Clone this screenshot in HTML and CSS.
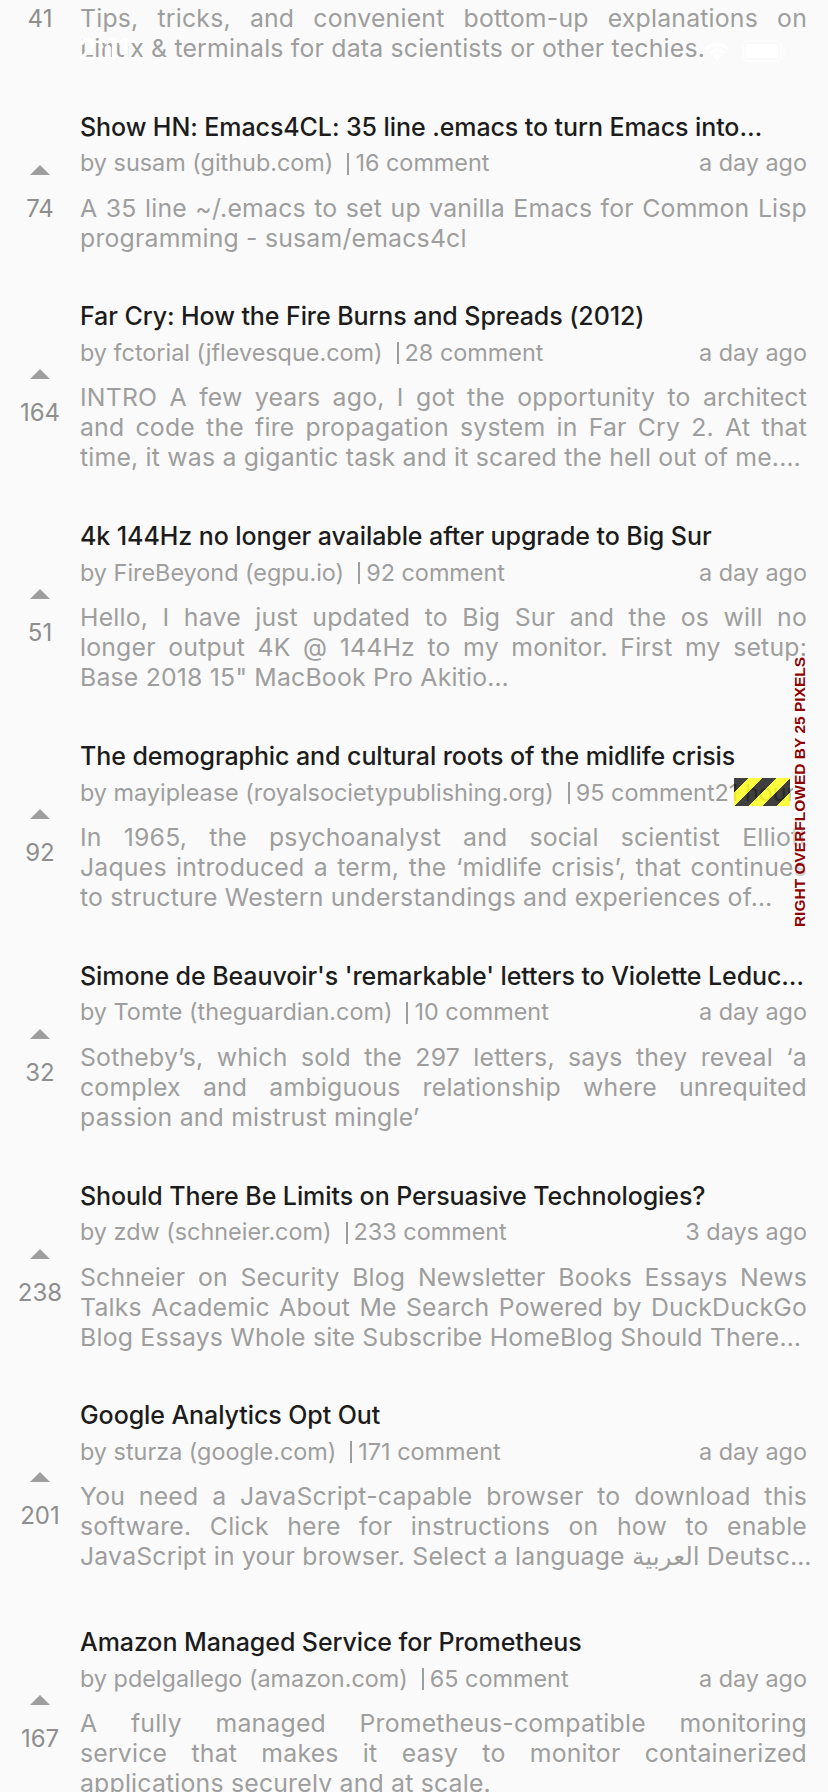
FILE: index.html
```html
<!DOCTYPE html>
<html lang="en">
<head>
<meta charset="utf-8">
<title>Hacker News</title>
<link rel="stylesheet" href="styles.css">
</head>
<body>
<div class="statusbar">
  <span class="clock">2:11</span>
  <span class="status-icons">
    <svg class="wifi" viewBox="0 0 30 22"><path d="M15 21 10 15.5a7.5 7.5 0 0 1 10 0Z M6.5 12a12 12 0 0 1 17 0l-2.2 2.3a9 9 0 0 0-12.6 0Z M2.5 8a18 18 0 0 1 25 0l-2.2 2.3a15 15 0 0 0-20.6 0Z"/></svg>
    <svg class="battery" viewBox="0 0 46 22"><rect x="1" y="1" width="38" height="20" rx="5" fill="none" stroke="#fff" stroke-width="2" opacity=".5"/><rect x="4" y="4" width="32" height="14" rx="2.5"/><rect x="41" y="7" width="3" height="8" rx="1.5" opacity=".5"/></svg>
  </span>
</div>

<main class="feed">
  <article class="story">
    <div class="vote"><svg class="arrow" viewBox="0 0 48 48"><path d="M14 28 24 18 34 28Z"/></svg><span class="count">41</span></div>
    <div class="body">
      <h2 class="title">The Linux Command Line for Data Scientists</h2>
      <div class="meta"><span class="by">by techie (github.com)</span><span class="sep"></span><span class="comments">12 comment</span><span class="ago">a day ago</span></div>
      <p class="desc"><span class="ln">Tips, tricks, and convenient bottom-up explanations on</span><span class="ln last">Linux &amp; terminals for data scientists or other techies.</span></p>
    </div>
  </article>

  <article class="story">
    <div class="vote"><svg class="arrow" viewBox="0 0 48 48"><path d="M14 28 24 18 34 28Z"/></svg><span class="count">74</span></div>
    <div class="body">
      <h2 class="title">Show HN: Emacs4CL: 35 line .emacs to turn Emacs into…</h2>
      <div class="meta"><span class="by">by susam (github.com)</span><span class="sep"></span><span class="comments">16 comment</span><span class="ago">a day ago</span></div>
      <p class="desc"><span class="ln">A 35 line ~/.emacs to set up vanilla Emacs for Common Lisp</span><span class="ln last">programming - susam/emacs4cl</span></p>
    </div>
  </article>

  <article class="story">
    <div class="vote"><svg class="arrow" viewBox="0 0 48 48"><path d="M14 28 24 18 34 28Z"/></svg><span class="count">164</span></div>
    <div class="body">
      <h2 class="title">Far Cry: How the Fire Burns and Spreads (2012)</h2>
      <div class="meta"><span class="by">by fctorial (jflevesque.com)</span><span class="sep"></span><span class="comments">28 comment</span><span class="ago">a day ago</span></div>
      <p class="desc"><span class="ln">INTRO A few years ago, I got the opportunity to architect</span><span class="ln">and code the fire propagation system in Far Cry 2. At that</span><span class="ln last">time, it was a gigantic task and it scared the hell out of me.…</span></p>
    </div>
  </article>

  <article class="story">
    <div class="vote"><svg class="arrow" viewBox="0 0 48 48"><path d="M14 28 24 18 34 28Z"/></svg><span class="count">51</span></div>
    <div class="body">
      <h2 class="title">4k 144Hz no longer available after upgrade to Big Sur</h2>
      <div class="meta"><span class="by">by FireBeyond (egpu.io)</span><span class="sep"></span><span class="comments">92 comment</span><span class="ago">a day ago</span></div>
      <p class="desc"><span class="ln">Hello, I have just updated to Big Sur and the os will no</span><span class="ln">longer output 4K @ 144Hz to my monitor. First my setup:</span><span class="ln last">Base 2018 15" MacBook Pro Akitio…</span></p>
    </div>
  </article>

  <article class="story">
    <div class="vote"><svg class="arrow" viewBox="0 0 48 48"><path d="M14 28 24 18 34 28Z"/></svg><span class="count">92</span></div>
    <div class="body">
      <h2 class="title">The demographic and cultural roots of the midlife crisis</h2>
      <div class="meta-wrap">
        <div class="meta clipped"><span class="by">by mayiplease (royalsocietypublishing.org)</span><span class="sep"></span><span class="comments">95 comment</span><span class="ago tight">21 hours ago</span></div>
        <div class="overflow-stripes"></div>
        <div class="overflow-label">RIGHT OVERFLOWED BY 25 PIXELS</div>
      </div>
      <p class="desc"><span class="ln">In 1965, the psychoanalyst and social scientist Elliott</span><span class="ln">Jaques introduced a term, the ‘midlife crisis’, that continues</span><span class="ln last">to structure Western understandings and experiences of…</span></p>
    </div>
  </article>

  <article class="story">
    <div class="vote"><svg class="arrow" viewBox="0 0 48 48"><path d="M14 28 24 18 34 28Z"/></svg><span class="count">32</span></div>
    <div class="body">
      <h2 class="title">Simone de Beauvoir's 'remarkable' letters to Violette Leduc…</h2>
      <div class="meta"><span class="by">by Tomte (theguardian.com)</span><span class="sep"></span><span class="comments">10 comment</span><span class="ago">a day ago</span></div>
      <p class="desc"><span class="ln">Sotheby’s, which sold the 297 letters, says they reveal ‘a</span><span class="ln">complex and ambiguous relationship where unrequited</span><span class="ln last">passion and mistrust mingle’</span></p>
    </div>
  </article>

  <article class="story">
    <div class="vote"><svg class="arrow" viewBox="0 0 48 48"><path d="M14 28 24 18 34 28Z"/></svg><span class="count">238</span></div>
    <div class="body">
      <h2 class="title">Should There Be Limits on Persuasive Technologies?</h2>
      <div class="meta"><span class="by">by zdw (schneier.com)</span><span class="sep"></span><span class="comments">233 comment</span><span class="ago">3 days ago</span></div>
      <p class="desc"><span class="ln">Schneier on Security Blog Newsletter Books Essays News</span><span class="ln">Talks Academic About Me Search Powered by DuckDuckGo</span><span class="ln last">Blog Essays Whole site Subscribe HomeBlog Should There…</span></p>
    </div>
  </article>

  <article class="story">
    <div class="vote"><svg class="arrow" viewBox="0 0 48 48"><path d="M14 28 24 18 34 28Z"/></svg><span class="count">201</span></div>
    <div class="body">
      <h2 class="title">Google Analytics Opt Out</h2>
      <div class="meta"><span class="by">by sturza (google.com)</span><span class="sep"></span><span class="comments">171 comment</span><span class="ago">a day ago</span></div>
      <p class="desc mixed-script"><span class="ln">You need a JavaScript-capable browser to download this</span><span class="ln">software. Click here for instructions on how to enable</span><span class="ln last">JavaScript in your browser. Select a language <span lang="ar" class="ar">العربية</span> Deutsc…</span></p>
    </div>
  </article>

  <article class="story">
    <div class="vote"><svg class="arrow" viewBox="0 0 48 48"><path d="M14 28 24 18 34 28Z"/></svg><span class="count">167</span></div>
    <div class="body">
      <h2 class="title">Amazon Managed Service for Prometheus</h2>
      <div class="meta"><span class="by">by pdelgallego (amazon.com)</span><span class="sep"></span><span class="comments">65 comment</span><span class="ago">a day ago</span></div>
      <p class="desc"><span class="ln">A fully managed Prometheus-compatible monitoring</span><span class="ln">service that makes it easy to monitor containerized</span><span class="ln last">applications securely and at scale.</span></p>
    </div>
  </article>
</main>
</body>
</html>
```

FILE: styles.css
```css
html, body {
  margin: 0;
  padding: 0;
  width: 828px;
  height: 1792px;
  overflow: hidden;
  background: #fafafa;
}

body {
  position: relative;
  font-family: Inter, "DejaVu Sans", sans-serif;
  color: #9e9e9e;
}

/* status bar (white on light background) */
.statusbar {
  position: absolute;
  top: 0;
  left: 0;
  right: 0;
  height: 96px;
  display: flex;
  align-items: flex-start;
  justify-content: space-between;
  padding: 34px 40px 0 78px;
  box-sizing: border-box;
  z-index: 5;
  color: #fff;
}
.clock {
  font-size: 30px;
  font-weight: 600;
  line-height: 30px;
  letter-spacing: -0.5px;
}
.status-icons {
  display: flex;
  align-items: center;
  gap: 10px;
  padding-top: 6px;
}
.wifi { width: 30px; height: 22px; fill: #fff; }
.battery { width: 46px; height: 22px; fill: #fff; }

/* feed */
.feed {
  margin-top: -81.2px;
}

.story {
  display: flex;
  padding-bottom: 45.8px;
}

.vote {
  width: 80px;
  flex: none;
  display: flex;
  flex-direction: column;
  align-items: center;
  justify-content: center;
  padding-top: 8px;
  box-sizing: border-box;
}
.arrow {
  width: 48px;
  height: 48px;
  fill: #9e9e9e;
  display: block;
}
.count {
  font-size: 24px;
  line-height: 28px;
  color: #8e8e8e;
}

.body {
  flex: 1;
  min-width: 0;
  padding-right: 21px;
}

.title {
  margin: 0;
  font-size: 25px;
  font-weight: 500;
  letter-spacing: -0.08px;
  line-height: 36px;
  color: #1c1c1c;
  white-space: nowrap;
  overflow: hidden;
  text-overflow: ellipsis;
}

.meta {
  display: flex;
  align-items: center;
  height: 36px;
  font-size: 23.4px;
  white-space: nowrap;
}
.sep {
  flex: none;
  width: 2px;
  height: 22px;
  margin: 2px 6px 0 14px;
  background: #9e9e9e;
}
.ago {
  margin-left: auto;
  padding-left: 12px;
}
.ago.tight {
  margin-left: 0;
  padding-left: 0;
}

.meta-wrap {
  position: relative;
}
.meta.clipped {
  overflow: hidden;
  margin-right: 14px;
}
.overflow-stripes {
  position: absolute;
  top: 4px;
  right: 17px;
  width: 56px;
  height: 28px;
  background: repeating-linear-gradient(135deg,
    rgba(0, 0, 0, 0.75) 0 10px,
    rgba(255, 255, 0, 0.75) 10px 20px);
}
.overflow-label {
  position: absolute;
  top: 50%;
  right: 7px;
  transform: translate(50%, -50%) rotate(-90deg);
  font-family: "Liberation Sans", Arial, sans-serif;
  font-size: 15.5px;
  font-weight: 700;
  line-height: 14px;
  color: #900000;
  background: rgba(255, 255, 255, 0.55);
  white-space: nowrap;
  z-index: 3;
}

.desc {
  margin: 12px 0 0;
  font-size: 24.8px;
  letter-spacing: 0.2px;
  line-height: 30px;
}
.desc.mixed-script {
  padding-bottom: 6px;
}
.ln {
  display: block;
  text-align: justify;
  text-align-last: justify;
}
.ln.last {
  text-align-last: left;
  white-space: nowrap;
}
.ar {
  font-family: "DejaVu Sans", sans-serif;
  letter-spacing: 0;
}
```
